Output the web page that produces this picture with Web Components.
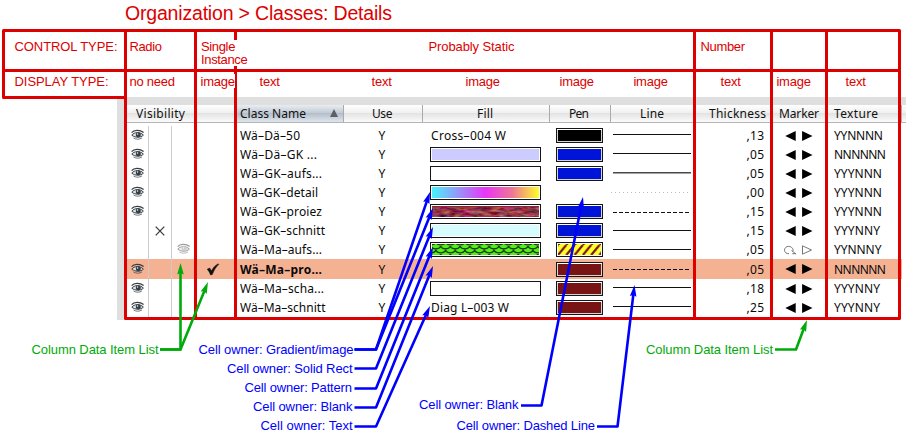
<!DOCTYPE html>
<html lang="en">
<head>
<meta charset="utf-8">
<title>Organization &gt; Classes: Details</title>
<style>
html,body{margin:0;padding:0;background:#fff;overflow:hidden}
</style>
</head>
<body>
<class-sheet></class-sheet>
<script>
const RED='#dd0000', BLUE='#0000ff', GREEN='#00aa0a';

/* Text set to a given advance width by tracking. */
class FitText extends HTMLElement{
  connectedCallback(){
    if(this.shadowRoot)return;
    this.attachShadow({mode:'open'}).innerHTML=
      '<style>:host{display:block;white-space:pre;width:max-content}span{display:inline-block}</style><span><slot></slot></span>';
    const w=parseFloat(this.getAttribute('w'));
    if(!w)return;
    const s=this.shadowRoot.querySelector('span');
    const nat=s.getBoundingClientRect().width, n=this.textContent.length;
    const ls=(w-nat)/Math.max(1,n-1);
    s.style.letterSpacing=ls+'px';
    s.style.marginRight=(-ls)+'px';
  }
}
customElements.define('fit-text',FitText);

class EyeIcon extends HTMLElement{
  connectedCallback(){
    const faint=this.hasAttribute('faint');
    this.attachShadow({mode:'open'}).innerHTML=`<style>:host{display:block;width:14px;height:12px}svg{display:block}</style>
    <svg width="14" height="12" viewBox="0 0 14 12" fill="none" stroke="#3c3c3c" ${faint?'opacity=".5"':''}>
      <path d="M.6 3.600C3 .9 8.500 .5 12.600 3.500" stroke-width="1.300"/>
      <path d="M.8 6.200C3 3 9 2.600 12.400 6.100C9.500 8.900 4.500 9 .8 6.200Z" fill="#e4e4e4" stroke-width="1"/>
      <circle cx="7.300" cy="5.800" r="2.500" fill="${faint?'#999':'#2c4050'}" stroke="none"/>
      <circle cx="6.600" cy="5" r=".7" fill="#fff" stroke="none"/>
      <path d="M2.500 9C5.300 10.700 8.500 10.500 11 8.900" stroke-width="1" opacity=".7"/>
    </svg>`;
  }
}
customElements.define('eye-icon',EyeIcon);

class StateMark extends HTMLElement{
  connectedCallback(){
    const k=this.getAttribute('kind');
    this.attachShadow({mode:'open'}).innerHTML='<style>:host{display:block}svg{display:block}</style>'+({
      cross:'<svg width="10" height="10" fill="none" stroke="#333" stroke-width="1.200"><path d="M.7.7L9.300 9.300M9.300.7L.7 9.300"/></svg>',
      check:'<svg width="14" height="13"><path d="M1.200 6.200L3.700 5L5.400 8C7 5 9 2.400 12.200 .8L12.700 1.600C9.800 4.200 8 7.300 6.300 11.600L4.500 11.900C3.800 9.800 2.500 7.500 1.200 6.200Z" fill="#111" stroke="#111" stroke-width=".5"/></svg>',
      arrows:'<svg width="28" height="12"><path d="M.3 6L10.700 .9V11.100ZM27.500 6L17.100 .9V11.100Z" fill="#000"/></svg>',
      open:'<svg width="29" height="12" fill="none" stroke="#777" style="margin-left:-1px"><path d="M5 9.600H3.200A4.300 3.700 0 1 1 8.800 7.500M7.500 6.500L11.800 9.900M8.300 9.700H12" /><path d="M18.500 1.800V10.200L27.500 6Z"/></svg>'
    })[k];
  }
}
customElements.define('state-mark',StateMark);

class ColorSwatch extends HTMLElement{
  connectedCallback(){
    const k=this.getAttribute('paint'), w=+this.getAttribute('w'), iw=w-4;
    let defs='', fill=k, extra='';
    if(k==='rainbow'){
      defs='<linearGradient id="g"><stop offset="0" stop-color="#46f3fa"/><stop offset=".5" stop-color="#e934f6"/><stop offset=".75" stop-color="#ee7795"/><stop offset="1" stop-color="#ffff2b"/></linearGradient>';
      fill='url(#g)';
    }else if(k==='marble'){
      defs='<filter id="m" x="0" y="0" width="1" height="1" color-interpolation-filters="sRGB"><feTurbulence type="fractalNoise" baseFrequency=".1 .3" numOctaves="3" seed="8"/><feColorMatrix values=".8 0 0 0 .17  .4 .6 0 0 -.29  .4 0 .5 0 -.17  0 0 0 0 1"/></filter>';
      fill='#8a2238'; extra=`<rect x="2" y="3" width="${iw}" height="10" filter="url(#m)"/>`;
    }else if(k==='scales'){
      defs='<pattern id="s" width="9.700" height="8" patternUnits="userSpaceOnUse" x="1" y="4"><rect width="10" height="8" fill="#58ee1c"/><path d="M0 0A5 3.800 0 0 0 9.700 0M-4.850 4A5 3.800 0 0 0 4.850 4A5 3.800 0 0 0 14.550 4M0 0V1M9.700 0V1M4.850 4V5" fill="none" stroke="#123b09" stroke-width="1.200"/></pattern>';
      fill='url(#s)';
    }else if(k==='hazard'){
      defs='<pattern id="h" width="8.300" height="10" patternUnits="userSpaceOnUse" x="2" y="3"><rect width="9" height="10" fill="#ffff2b"/><path d="M-8.300 10L0 0M0 10L8.300 0M8.300 10L16.600 0" stroke="#7a1515" stroke-width="2.200"/></pattern>';
      fill='url(#h)';
    }
    const dark=['#000','#0014d8','#781414'].includes(k);
    this.attachShadow({mode:'open'}).innerHTML=`<style>:host{display:block;height:15px}svg{display:block}</style>
    <svg width="${w}" height="15"><defs>${defs}</defs>
      <rect x=".5" y=".5" width="${w-1}" height="14" fill="#fff" stroke="#151515"/>
      ${dark?`<rect x="1" y="1" width="${w-2}" height="13" fill="#d4d4d6"/><rect x="1" y="1" width="${w-2}" height="1" fill="#fff" />`:''}
      <rect x="2" y="2" width="${iw}" height="11" fill="${fill}"/>${extra}
    </svg>`;
  }
}
customElements.define('color-swatch',ColorSwatch);

class LineSample extends HTMLElement{
  connectedCallback(){
    const k=this.getAttribute('kind'), y=+this.getAttribute('y');
    const a={solid:'stroke="#111" stroke-width="1"',thick:'stroke="#484848" stroke-width="1.500"',
      dash:'stroke="#111" stroke-width="1" stroke-dasharray="4 2"',dot:'stroke="#bbb" stroke-width="1" stroke-dasharray="1 3"'}[k];
    this.attachShadow({mode:'open'}).innerHTML=`<style>:host{display:block}svg{display:block}</style><svg width="81" height="18"><path d="M${k==='dot'?0:2} ${y}H80" fill="none" ${a}/></svg>`;
  }
}
customElements.define('line-sample',LineSample);

const COLS='69px 40px 108px 79px 127px 61px 84px 77px 55px 79px';

class DataRow extends HTMLElement{
  connectedCallback(){
    const d=this.data, sel=d.sel;
    this.attachShadow({mode:'open'}).innerHTML=`<style>
      :host{display:grid;grid-template-columns:${COLS};height:${sel?20:19}px;background:${sel?'linear-gradient(90deg,#f5b293 775px,#fff 775px)':'transparent'};
        font:12px/18px "Noto Sans",sans-serif;color:#0a0a0a}
      div{display:flex;align-items:flex-end;min-width:0;height:100%}
      div>fit-text{height:18px}
      .vis{display:grid;grid-template-columns:22px 23px 24px;justify-items:center;align-items:center}
      .vis>i{display:grid;place-items:center;width:100%;height:100%;box-sizing:border-box;border-right:1px solid #ccc}
      .vis>i:last-child{border:0}
      .vis eye-icon{margin:-1px 0 0 0}
      .pick{justify-content:center;align-items:center;box-sizing:border-box;padding-right:6px}
      .name{padding-left:4px;${sel?'font-weight:700':''}}
      .use{justify-content:center;box-sizing:border-box;padding-right:3px}
      .fill{padding-left:7px}.fill fit-text{margin-left:1px}
      .fill color-swatch,.pen color-swatch{margin-bottom:2px}
      .pen{padding-left:6px}
      .thick{justify-content:flex-end;padding-right:8px}
      .mark{align-items:center;padding-left:13px}
      .mark state-mark{margin-top:0}
      .tex{padding-left:7px}
    </style>
    <div class="vis"><i>${d.v===0?'<eye-icon></eye-icon>':''}</i><i>${d.v===1?'<state-mark kind="cross"></state-mark>':''}</i><i>${d.v===2?'<eye-icon faint></eye-icon>':''}</i></div>
    <div class="pick">${sel?'<state-mark kind="check"></state-mark>':''}</div>
    <div class="name"><fit-text w="${d.nw}">${d.n}</fit-text></div>
    <div class="use"><fit-text>Y</fit-text></div>
    <div class="fill">${d.ft?`<fit-text w="${d.fw}">${d.ft}</fit-text>`:d.f?`<color-swatch w="111" paint="${d.f}"></color-swatch>`:''}</div>
    <div class="pen">${d.p?`<color-swatch w="47" paint="${d.p}"></color-swatch>`:''}</div>
    <div><line-sample kind="${d.l}" y="${d.ly}"></line-sample></div>
    <div class="thick"><fit-text w="17.500">${d.t}</fit-text></div>
    <div class="mark"><state-mark kind="${d.v===2?'open':'arrows'}"></state-mark></div>
    <div class="tex"><fit-text w="${d.xw}">${d.x}</fit-text></div>`;
  }
}
customElements.define('data-row',DataRow);

const B='#0014d8', M='#781414';
const ROWS=[
 {v:0,n:'Wä–Dä–50',nw:60,ft:'Cross–004 W',fw:75,p:'#000',l:'solid',ly:7.5,t:',13',x:'YYNNNN',xw:49},
 {v:0,n:'Wä–Dä–GK ...',nw:77,f:'#ccccff',p:B,l:'solid',ly:7.5,t:',05',x:'NNNNNN',xw:52},
 {v:0,n:'Wä–GK–aufs...',nw:82,f:'#fff',p:B,l:'thick',ly:7.7,t:',05',x:'YYYNNN',xw:48},
 {v:0,n:'Wä–GK–detail',nw:78,f:'rainbow',l:'dot',ly:8.5,t:',00',x:'YYYNNN',xw:48},
 {v:0,n:'Wä–GK–proiez',nw:82,f:'marble',p:B,l:'dash',ly:9.5,t:',15',x:'YYYNNN',xw:48},
 {v:1,n:'Wä–GK–schnitt',nw:85,f:'#d6fcfd',p:B,l:'solid',ly:8.5,t:',15',x:'YYYNNY',xw:46},
 {v:2,n:'Wä–Ma–aufs...',nw:82,f:'scales',p:'hazard',l:'solid',ly:8.5,t:',05',x:'YYNNNY',xw:47.500},
 {v:0,sel:1,n:'Wä–Ma–pro...',nw:82,p:M,l:'dash',ly:8.5,t:',05',x:'NNNNNN',xw:52},
 {v:0,n:'Wä–Ma–scha...',nw:84,f:'#fff',p:M,l:'solid',ly:7.5,t:',18',x:'YYYNNY',xw:46},
 {v:0,n:'Wä–Ma–schnitt',nw:85.500,ft:'Diag L–003 W',fw:78,p:M,l:'solid',ly:7.5,t:',25',x:'YYYNNY',xw:46},
];

class ClassTable extends HTMLElement{
  connectedCallback(){
    const r=this.attachShadow({mode:'open'});
    r.innerHTML=`<style>
      :host{display:block;margin:97px 0 0 117px;width:789px;height:223px;background:linear-gradient(90deg,#dfdfdf 8px,#fff 8px)}
      .band{height:8px;background:#dfdfdf}
      .head,.body{margin-left:10px;width:779px}
      .head{display:grid;grid-template-columns:${COLS};height:18px;box-sizing:border-box;border-bottom:1px solid #b4b4b4;margin-bottom:3px;
        background:linear-gradient(#fff,#f0f0f0 45%,#e3e3e3 50%,#fbfbfb);font:12px/17px "Noto Sans",sans-serif;color:#111}
      .head>div{display:flex;box-sizing:border-box;border-right:1px solid #aaa;min-width:0}
      .head>div.sort{background:linear-gradient(#e8edf2,#c3cbd4 45%,#b5bfca 50%,#dfe6ed);justify-content:space-between;padding:0 5px 0 4px;align-items:center}
      .tri{width:0;height:0;border:4px solid transparent;border-top:0;border-bottom:8px solid #5c6065;margin-top:-1px}
      .last i{margin-left:23px;border-left:1px solid #aaa}
    </style>
    <div class="band"></div>
    <div class="head">
      <div style="padding-left:9px"><fit-text w="49">Visibility</fit-text></div><div></div>
      <div class="sort"><fit-text w="66">Class Name</fit-text><span class="tri"></span></div>
      <div style="padding-left:28px"><fit-text w="20.500">Use</fit-text></div>
      <div style="padding-left:54px"><fit-text w="16">Fill</fit-text></div>
      <div style="padding-left:19px"><fit-text w="20">Pen</fit-text></div>
      <div style="padding-left:29px"><fit-text w="24">Line</fit-text></div>
      <div style="padding-left:14px"><fit-text w="57">Thickness</fit-text></div>
      <div style="padding-left:7px"><fit-text w="40">Marker</fit-text></div>
      <div class="last" style="padding-left:7px;border:0"><fit-text w="44">Texture</fit-text><i></i></div>
    </div>
    <div class="body"></div>`;
    const body=r.querySelector('.body');
    for(const d of ROWS){const e=document.createElement('data-row');e.data=d;body.append(e);}
  }
}
customElements.define('class-table',ClassTable);

/* Red column frames across the heading and the table. */
class FrameLines extends HTMLElement{
  connectedCallback(){
    this.attachShadow({mode:'open'}).innerHTML=`<style>:host{display:block}svg{display:block}</style>
    <svg width="906" height="439" fill="none" stroke="${RED}" stroke-width="3" stroke-linejoin="round">
    <path d="M125.500 97.500H3.500V30.500H899.500V318.500H125.500V30.500M3.500 70.500H899.500M195.500 30V318M235.500 30V318M694.500 30V318M771.500 30V318M826.500 30V318"/></svg>`;
  }
}
customElements.define('frame-lines',FrameLines);

class TypeHeading extends HTMLElement{
  connectedCallback(){
    const row=(cells)=>cells.map(([gap,w,t,c])=>`<fit-text class="${c||''}" style="margin-left:${gap}px" w="${w}">${t}</fit-text>`).join('');
    const place=(items)=>{let x=0;return row(items.map(([l,w,t,c])=>{const g=l-x;x=l+w;return [g,w,t,c]}));};
    this.attachShadow({mode:'open'}).innerHTML=`<style>
      :host{display:block;font:13px/16px "Liberation Sans",sans-serif;color:${RED}}
      .title{font-size:19.500px;line-height:24px;padding:1px 0 0 125px;height:36px;box-sizing:border-box}
      .row{display:flex;align-items:flex-start;height:35px;padding-top:3px;box-sizing:border-box}
      .two{line-height:13px;background:#fff;margin-top:1px;height:26px;width:47px;white-space:nowrap;letter-spacing:-.35px}
      .clip{background:#fff;height:14px}
      .stack{margin-left:39px;margin-right:180px;flex:none}
    </style>
    <div class="title"><fit-text w="267">Organization &gt; Classes: Details</fit-text></div>
    <div class="row">
      ${place([[14.5,103,'CONTROL TYPE:'],[129.5,32.5,'Radio']])}
      <div class="two stack">Single<br>Instance</div>
      <fit-text style="margin-left:0.500px" w="86">Probably Static</fit-text>
      <fit-text style="margin-left:186px" w="44.500">Number</fit-text>
    </div>
    <div class="row">${place([[14.5,94,'DISPLAY TYPE:'],[129.5,45.5,'no need'],[200.5,34.5,'image','clip'],[259.5,20.5,'text'],[371.5,20.5,'text'],[465.5,34.5,'image'],[559.5,34.5,'image'],[633.5,34.5,'image'],[720.5,20.5,'text'],[776.5,34.5,'image'],[845.5,20.5,'text']])}</div>`;
  }
}
customElements.define('type-heading',TypeHeading);

/* Callouts: labels on a free canvas with leader arrows. */
class CalloutLayer extends HTMLElement{
  connectedCallback(){
    const arrows=[
      [BLUE,354.5,349.5,376,430,192],[BLUE,354.5,349.5,376,433,208],[BLUE,354.5,368.5,376,433,227],
      [BLUE,354.5,388.5,376,433,247],[BLUE,354.5,407.5,376,433,266],[BLUE,354.5,426.5,376,430,306],
      [BLUE,521,405.5,541.5,583,197],[BLUE,597,426.5,617.5,634.5,285],
      [GREEN,160,349.5,180.5,180.5,263],[GREEN,160,349.5,180.5,208,282],[GREEN,775,349.5,796,807,320]];
    const s=arrows.map(([c,x0,y0,x1,tx,ty])=>{
      const dx=tx-x1,dy=ty-y0,L=Math.hypot(dx,dy),a=Math.atan2(dy,dx)*180/Math.PI;
      return `<path d="M${x0} ${y0}H${x1}L${tx-dx/L*8} ${ty-dy/L*8}" fill="none" stroke="${c}" stroke-width="2.600" stroke-linejoin="round"/>
      <path d="M0 0L-11.500 3.300L-10 0L-11.500 -3.300Z" fill="${c}" transform="translate(${tx} ${ty}) rotate(${a})"/>`;}).join('');
    const labels=[[198.5,155,354,'Cell owner: Gradient/image'],[227,125.5,373,'Cell owner: Solid Rect'],[244.5,107.5,392,'Cell owner: Pattern'],
      [253,99.5,411,'Cell owner: Blank'],[260.5,92,430,'Cell owner: Text'],[419,99.5,409,'Cell owner: Blank'],[456.5,138.5,430,'Cell owner: Dashed Line'],
      [31.5,127,354,'Column Data Item List',1],[646,127,354,'Column Data Item List',1]];
    this.attachShadow({mode:'open'}).innerHTML=`<style>:host{display:block;position:relative;font:13px/16px "Liberation Sans",sans-serif;color:${BLUE}}
      svg{display:block}fit-text{position:absolute}</style><svg width="906" height="439">${s}</svg>`+
      labels.map(([x,w,y,t,g])=>`<fit-text w="${w}" style="left:${x}px;top:${y-12}px;${g?'color:'+GREEN:''}">${t}</fit-text>`).join('');
  }
}
customElements.define('callout-layer',CalloutLayer);

class ClassSheet extends HTMLElement{
  connectedCallback(){
    this.attachShadow({mode:'open'}).innerHTML=`<style>:host{display:grid;width:906px;height:439px;overflow:hidden;background:#fff}
      class-table,frame-lines,type-heading,callout-layer{grid-area:1/1}</style>
      <class-table></class-table><frame-lines></frame-lines><type-heading></type-heading><callout-layer></callout-layer>`;
  }
}
customElements.define('class-sheet',ClassSheet);
</script>
</body>
</html>
